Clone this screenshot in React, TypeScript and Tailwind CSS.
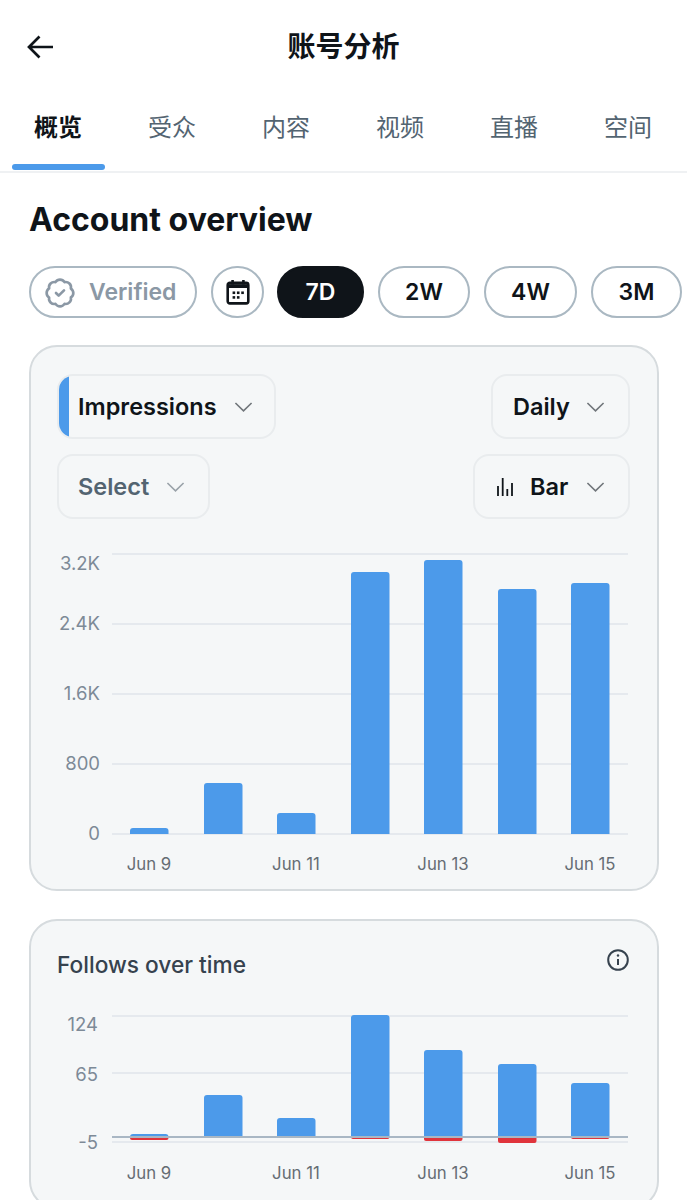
import React from 'react';
import { BadgeCheck } from 'lucide-react';

const FONT = 'font-["Inter","Noto_Sans_CJK_SC",sans-serif]';

const tabs = ['概览', '受众', '内容', '视频', '直播', '空间'];
const ranges = [
  { label: '7D', width: 'w-[87px] -ml-px', active: true },
  { label: '2W', width: 'w-[92px]', active: false },
  { label: '4W', width: 'w-[93px]', active: false },
  { label: '3M', width: 'w-[91px]', active: false },
];
const barX = [130, 204, 277, 351, 424, 498, 571];

const Chevron = ({ className }: { className: string }) => (
  <svg viewBox="0 0 20 12" fill="none" stroke="currentColor" strokeWidth="1.7" className={className}>
    <path d="M1.5 1.8 10 10l8.5-8.2" />
  </svg>
);

const Dropdown = ({ children, className, chevron = 'ml-[16px] text-[#71767b]' }: { children: React.ReactNode; className: string; chevron?: string }) => (
  <div className={`relative flex h-[65px] items-center overflow-hidden rounded-2xl border-2 border-[#e9ecee] text-[23.5px] font-semibold ${className}`}>
    {children}
    <Chevron className={`h-[12px] w-[19px] shrink-0 ${chevron}`} />
  </div>
);

const ImpressionsChart = () => {
  const tops = [828, 783, 813, 572, 560, 589, 583];
  return (
    <svg viewBox="57 540 573 340" className="mt-[21px] block h-[340px] w-[573px]">
      {[554, 624, 694, 764, 834].map((y) => (
        <line key={y} x1="112" x2="628" y1={y} y2={y} stroke="#e5e9ee" strokeWidth="2" />
      ))}
      {barX.map((x, i) => (
        <path key={x} d={`M${x} 834V${tops[i] + 3}a3 3 0 0 1 3-3h32.5a3 3 0 0 1 3 3V834z`} fill="#4c9aea" />
      ))}
      <g fill="#7d8a97" fontSize="18.5" textAnchor="end">
        <text x="100" y="570">3.2K</text>
        <text x="100" y="630">2.4K</text>
        <text x="100" y="700">1.6K</text>
        <text x="100" y="770">800</text>
        <text x="100" y="840">0</text>
      </g>
      <g fill="#666d74" fontSize="16.8" textAnchor="middle">
        <text x="149" y="870">Jun 9</text>
        <text x="296" y="870">Jun 11</text>
        <text x="443" y="870">Jun 13</text>
        <text x="590" y="870">Jun 15</text>
      </g>
    </svg>
  );
};

const FollowsChart = () => {
  const tops = [1134, 1095, 1118, 1015, 1050, 1064, 1083];
  const reds = [1140, 1137, 1137, 1139, 1141, 1143, 1139];
  return (
    <svg viewBox="57 1000 573 190" className="mt-[21px] block h-[190px] w-[573px]">
      {[1016, 1073, 1142].map((y) => (
        <line key={y} x1="112" x2="628" y1={y} y2={y} stroke="#e5e9ee" strokeWidth="2" />
      ))}
      {barX.map((x, i) => (
        <g key={x}>
          {reds[i] > 1137 && (
            <path d={`M${x} 1137V${reds[i] - 2}a2 2 0 0 0 2 2h34.5a2 2 0 0 0 2-2V1137z`} fill="#e0343c" />
          )}
          <path d={`M${x} 1137V${tops[i] + 3}a3 3 0 0 1 3-3h32.5a3 3 0 0 1 3 3V1137z`} fill="#4c9aea" />
        </g>
      ))}
      <line x1="112" x2="628" y1="1137" y2="1137" stroke="#a9b7c4" strokeWidth="2" />
      <g fill="#7d8a97" fontSize="18.5" textAnchor="end">
        <text x="98" y="1031">124</text>
        <text x="98" y="1081">65</text>
        <text x="98" y="1149">-5</text>
      </g>
      <g fill="#666d74" fontSize="16.8" textAnchor="middle">
        <text x="149" y="1179">Jun 9</text>
        <text x="296" y="1179">Jun 11</text>
        <text x="443" y="1179">Jun 13</text>
        <text x="590" y="1179">Jun 15</text>
      </g>
    </svg>
  );
};

export default function App() {
  return (
    <div className={`h-[1200px] w-[687px] overflow-hidden bg-white text-[#0f1419] ${FONT}`}>
      <header className="relative flex h-[94px] items-center justify-center">
        <svg viewBox="0 0 26 24" fill="none" stroke="#0f1419" strokeWidth="2.7" className="absolute left-[27px] top-[35px] h-[24px] w-[26px]">
          <path d="M12.5 1.5 2 12l10.5 10.5M2 12h24" />
        </svg>
        <h1 className="text-[28px] font-semibold leading-none">账号分析</h1>
      </header>

      <nav className="flex border-b-2 border-[#eff1f3] pl-px">
        {tabs.map((tab, i) => (
          <div key={tab} className="flex w-[114px] flex-col items-center pt-[18px]">
            <span className={`text-[24px] leading-8 ${i === 0 ? 'font-bold' : 'text-[#536471]'}`}>{tab}</span>
            <div className={`mt-[20px] mb-px ml-px h-[6px] w-[93px] rounded-full ${i === 0 ? 'bg-[#4c9aea]' : ''}`} />
          </div>
        ))}
      </nav>

      <h2 className="ml-[29px] mt-[27px] text-[32px] font-bold leading-10">Account overview</h2>

      <div className="mt-[26px] flex items-center gap-[14px] pl-[29px]">
        <div className="flex h-[52px] w-[168px] shrink-0 items-center rounded-full border-2 border-[#aab8c2] pl-[13px] pt-px text-[23px] font-semibold text-[#8b98a5]">
          <BadgeCheck className="h-[32px] w-[32px]" strokeWidth={2} />
          <span className="ml-[13px]">Verified</span>
        </div>
        <div className="flex h-[52px] w-[53px] shrink-0 items-center justify-center rounded-full border-2 border-[#aab8c2]">
          <svg viewBox="0 0 24 24" className="h-[26px] w-[26px]" fill="none" stroke="#0f1419" strokeWidth="2.4">
            <rect x="2.5" y="3.5" width="19" height="19" rx="2" />
            <path d="M2.5 6.5h19" strokeWidth="3.6" />
            <path d="M7 1v4M17 1v4" />
            <g fill="#0f1419" stroke="none">
              <rect x="7" y="11.5" width="2.4" height="2.4" />
              <rect x="11" y="11.5" width="2.4" height="2.4" />
              <rect x="15" y="11.5" width="2.4" height="2.4" />
              <rect x="7" y="15.8" width="2.4" height="2.4" />
              <rect x="11" y="15.8" width="2.4" height="2.4" />
            </g>
          </svg>
        </div>
        {ranges.map((r) => (
          <div
            key={r.label}
            className={`flex h-[52px] shrink-0 items-center justify-center rounded-full border-2 pt-px text-[23px] font-semibold ${r.width} ${
              r.active ? 'border-[#0f1419] bg-[#0f1419] text-white' : 'border-[#aab8c2]'
            }`}
          >
            {r.label}
          </div>
        ))}
      </div>

      <section className="ml-[29px] mt-[27px] h-[546px] w-[630px] rounded-[28px] border-2 border-[#d6dbde] bg-[#f5f7f8] pl-[26px] pr-[27px] pt-[27px]">
        <div className="flex justify-between">
          <Dropdown className="w-[219px] text-[23.3px]" chevron="ml-[17px] text-[#71767b]">
            <div className="h-full w-[10px] shrink-0 bg-[#4c9aea]" />
            <span className="ml-[9px]">Impressions</span>
          </Dropdown>
          <Dropdown className="w-[139px] pl-[20px]">
            <span>Daily</span>
          </Dropdown>
        </div>
        <div className="mt-[15px] flex justify-between">
          <Dropdown className="w-[153px] pl-[19px] text-[#536471]" chevron="ml-[17px] text-[#9aa2a9]">
            <span>Select</span>
          </Dropdown>
          <Dropdown className="w-[157px] pl-[22px]" chevron="ml-[18px] text-[#71767b]">
            <svg viewBox="0 0 16 18" className="mr-[17px] h-[18px] w-[16px] shrink-0" stroke="#0f1419" strokeWidth="1.8">
              <path d="M1 18V8M5.7 18V0M10.3 18V11M15 18V5" />
            </svg>
            <span>Bar</span>
          </Dropdown>
        </div>
        <ImpressionsChart />
      </section>

      <section className="ml-[29px] mt-[28px] h-[290px] w-[630px] rounded-[28px] border-2 border-[#d6dbde] bg-[#f5f7f8] pl-[26px] pr-[27px] pt-[30px]">
        <div className="flex items-start justify-between">
          <span className="text-[22.7px] font-medium leading-7 text-[#36424e]">Follows over time</span>
          <svg viewBox="0 0 22 22" fill="none" stroke="#36424e" strokeWidth="2" className="mr-[1px] mt-[-2px] h-[22px] w-[22px]">
            <circle cx="11" cy="11" r="9.8" />
            <path d="M11 10v6" />
            <circle cx="11" cy="6.5" r="1.2" fill="#36424e" stroke="none" />
          </svg>
        </div>
        <FollowsChart />
      </section>
    </div>
  );
}
